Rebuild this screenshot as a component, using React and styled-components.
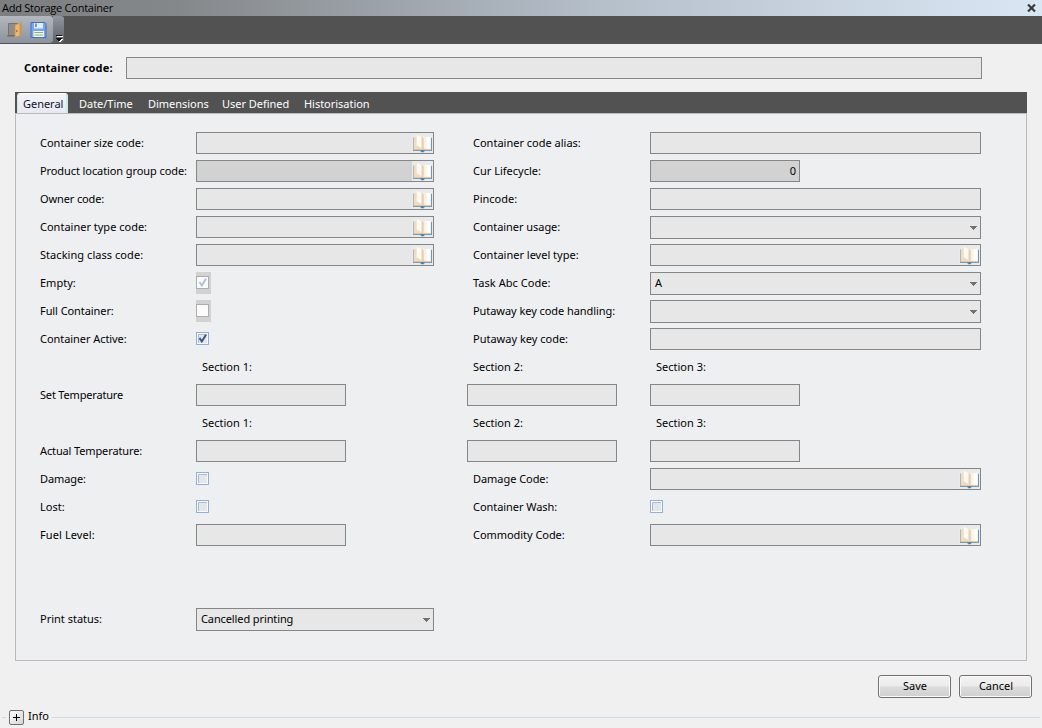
import React from 'react';
import styled, { createGlobalStyle } from 'styled-components';

const GlobalStyle = createGlobalStyle`
  * { box-sizing: border-box; }
  body {
    margin: 0;
    background: #f0f0f0;
    color: #000;
    font-family: "Noto Sans", "Open Sans", sans-serif;
    font-size: 11px;
    line-height: 14px;
  }
`;

const Window = styled.div`
  display: flex;
  flex-direction: column;
  width: 1042px;
  height: 728px;
  overflow: hidden;
`;

const TitleBar = styled.header`
  display: flex;
  align-items: center;
  justify-content: space-between;
  flex: none;
  height: 16px;
  padding: 0 6px 0 2px;
  background: linear-gradient(90deg, #7c7e80 0, #85888b 180px, #b5bfca 600px, #cfdae7 900px, #d9e6f4 100%);
`;

const Title = styled.span`
  font-family: "Open Sans", sans-serif;
  font-size: 11px;
  letter-spacing: -0.24px;
  white-space: nowrap;
`;

const ToolBar = styled.div`
  display: flex;
  flex: none;
  height: 28px;
  background: #525252;
`;

const ToolGroup = styled.div`
  display: flex;
  gap: 6px;
  width: 53px;
  height: 27px;
  padding: 5px 0 0 7px;
  border-radius: 0 3px 3px 0;
  background: linear-gradient(#b3b8c0, #8c929b);
`;

const ToolMore = styled.div`
  display: flex;
  align-items: flex-end;
  justify-content: center;
  width: 11px;
  height: 27px;
  padding: 0 0 1px 2px;
  border-radius: 0 3px 3px 0;
  background: linear-gradient(#9196a0, #5d6065);
`;

const CodeRow = styled.div`
  display: flex;
  align-items: center;
  flex: none;
  height: 48px;
  padding-left: 24px;
`;

const CodeLabel = styled.label`
  width: 102px;
  font-weight: bold;
  letter-spacing: 0.15px;
  white-space: nowrap;
`;

const Tabs = styled.nav`
  display: flex;
  align-items: flex-end;
  flex: none;
  width: 1012px;
  height: 21px;
  margin-left: 15px;
  padding-left: 2px;
  background: #525252;
`;

const Tab = styled.div`
  width: ${props => props.$width}px;
  height: 20px;
  padding: ${props => (props.$active ? '3px 0 0 5px' : '4px 0 0 11px')};
  border: ${props => (props.$active ? '1px solid #c8ecec' : '0')};
  border-right-width: ${props => (props.$active ? 2 : 0)}px;
  border-top-color: #fff;
  border-bottom: 0;
  border-radius: 3px 3px 0 0;
  background: ${props => (props.$active ? 'linear-gradient(#f4f4f8, #e6e9f0)' : 'none')};
  color: ${props => (props.$active ? '#101030' : '#fff')};
  letter-spacing: -0.03px;
  white-space: nowrap;
`;

const Panel = styled.main`
  display: grid;
  flex: none;
  grid-template-columns: 156px 271px 183px 331px;
  grid-auto-rows: 28px;
  width: 1012px;
  height: 548px;
  margin-left: 15px;
  padding: 15px 0 0 24px;
  border: 1px solid #b9babd;
  background: #eeeff1;
`;

const Label = styled.label`
  grid-column: ${props => props.$col};
  grid-row: ${props => props.$row};
  padding-left: ${props => (props.$col > 1 ? 6 : 0)}px;
  letter-spacing: ${props => props.$spacing || 0}px;
  line-height: 28px;
  white-space: nowrap;
`;

const Cell = styled.div`
  grid-column: ${props => props.$col};
  grid-row: ${props => props.$row};
  padding-top: 3px;
`;

const Box = styled.div`
  display: flex;
  align-items: center;
  justify-content: space-between;
  width: ${props => props.$width}px;
  height: ${props => (props.$select ? 23 : 22)}px;
  padding: 0 ${props => (props.$lookup ? 0 : 3)}px 0 4px;
  border: 1px solid #858688;
  background: ${props => (props.$disabled ? '#d2d2d2' : '#e7e7e7')};
`;

const Value = styled.span`
  height: 15px;
  line-height: 14px;
  letter-spacing: -0.11px;
`;

const CheckWrap = styled.div`
  width: 15px;
  height: 22px;
  padding-top: 4px;
  background: ${props => (props.$disabled ? '#d2d2d2' : 'none')};
`;

const Footer = styled.div`
  display: flex;
  justify-content: flex-end;
  flex: none;
  gap: 8px;
  height: 47px;
  padding: 14px 10px 0 0;
`;

const Button = styled.button`
  width: 73px;
  height: 23px;
  padding: 0 0 2px 1px;
  border: 1px solid #707070;
  border-radius: 3px;
  background: linear-gradient(#f3f3f3 0, #ebebeb 48%, #dcdcdc 52%, #cfcfcf 100%);
  box-shadow: inset 0 0 0 1px #fafafa;
  color: #000;
  font: inherit;
`;

const InfoRow = styled.div`
  display: flex;
  align-items: center;
  flex: none;
  height: 18px;
  padding: 0 2px;
`;

const Rule = styled.div`
  flex: ${props => (props.$width ? 'none' : 1)};
  width: ${props => props.$width || 0}px;
  height: 1px;
  background: #d0dce5;
`;

const Expander = styled.div`
  display: flex;
  width: 15px;
  height: 15px;
  margin: 0 4px 0 3px;
  border: 1px solid #707070;
  border-radius: 2px;
  background: linear-gradient(135deg, #fff, #d4d4d4);
`;

const InfoText = styled.span`
  width: 24px;
  height: 16px;
`;

const BookIcon = () => (
  <svg width="21" height="20" viewBox="0 0 21 20">
    <rect width="21" height="20" fill="#e9eaeb" />
    <path d="M1 4.500h18.500V18H1z" fill="#a9b9c6" />
    <path d="M19 5h1v13h-1z" fill="#5f9acb" />
    <path d="M1 17h18v1H1z" fill="#8399aa" />
    <path d="M2 4h9v12.500H2z" fill="#f2dcc0" />
    <path d="M11 4h8v12.500h-8z" fill="#fbf1e2" />
    <path d="M14.500 4.500l3.500-1v12l-3.500 1z" fill="#fffdf8" />
    <path d="M11 5v11" stroke="#d8b98f" strokeWidth=".8" />
    <path d="M2 16.500h17" stroke="#e3c59c" strokeWidth=".8" />
    <path d="M4.500 1l5 3v11l-5-2.500z" fill="#fffaf2" stroke="#eadfcf" strokeWidth=".5" />
    <path d="M8.500 17.500h4v1h-1v.7h-2v-.7h-1z" fill="#2f72a9" />
  </svg>
);

const Arrow = () => (
  <svg width="7" height="4" viewBox="0 0 7 4" shapeRendering="crispEdges">
    <path d="M0 0h7v1H6v1H5v1H4v1H3V3H2V2H1V1H0z" fill="#707276" />
  </svg>
);

const DoorIcon = () => (
  <svg width="17" height="18" viewBox="0 0 17 18">
    <path d="M1.500 2.500h9v12h-9z" fill="#8c8d8d" stroke="#77716b" />
    <path d="M0 15h11" stroke="#6c6259" />
    <path d="M8 4l6.500-2.500v12.500L8 16.500z" fill="#e9b779" stroke="#c89353" strokeWidth=".8" />
    <path d="M12.500 3l2-1v11.500l-2 1z" fill="#d29346" />
    <path d="M9.300 9h1v2h-1z" fill="#8a5b22" />
  </svg>
);

const DiskIcon = () => (
  <svg width="17" height="18" viewBox="0 0 17 18">
    <path d="M1 1.500h14l1 1V16.500H1z" fill="#75a5ec" stroke="#3f70bd" />
    <path d="M4 2h9v5.500H4z" fill="#e3edfa" />
    <path d="M5 2.500h2v3.500H5z" fill="#6c98d9" />
    <path d="M3.500 10h10.500v6h-10.500z" fill="#f4f8ee" />
    <path d="M4.500 11.500h8.500M4.500 14h8.500" stroke="#83b06c" strokeWidth="1.200" />
  </svg>
);

const MoreIcon = () => (
  <svg width="7" height="7" viewBox="0 0 7 7" shapeRendering="crispEdges">
    <path d="M1 1h6v1H1zM1 4h6v1H6v1H5v1H3V6H2V5H1z" fill="#fff" />
    <path d="M0 0h6v1H0zM0 3h6v1H5v1H4v1H2V5H1V4H0z" fill="#111" />
  </svg>
);

const CloseIcon = () => (
  <svg width="9" height="8" viewBox="0 0 9 8">
    <path d="M1 .5l7 7M8 .5l-7 7" stroke="#3c3c3c" strokeWidth="2.200" />
  </svg>
);

const Plus = () => (
  <svg width="13" height="13" viewBox="0 0 13 13" shapeRendering="crispEdges">
    <path d="M3 6h7v1H3zM6 3h1v7H6z" fill="#000" />
  </svg>
);

function CheckBox({ checked, disabled }) {
  return (
    <CheckWrap $disabled={disabled}>
      <svg width="13" height="13" viewBox="0 0 13 13">
        <rect x=".5" y=".5" width="12" height="12" fill="#fbfbfb" stroke={disabled ? '#adadad' : '#8fb0dc'} />
        {!disabled && <path d="M2 2h9v9H2z" fill="#e3e6ea" />}
        {!disabled && <path d="M2.500 11V2.500H11" fill="none" stroke="#b3b9c2" />}
        {checked && (
          <path d="M3.500 6l2.300 3.500L10 2.800" fill="none" stroke={disabled ? '#b0bfda' : '#34568f'} strokeWidth="2" />
        )}
      </svg>
    </CheckWrap>
  );
}

function Field({ type, width, value, disabled }) {
  if (type === 'check') return <CheckBox checked={value} disabled={disabled} />;
  return (
    <Box $width={width} $select={type === 'select'} $lookup={type === 'lookup'} $disabled={disabled}>
      <Value>{type === 'number' ? '' : value}</Value>
      {type === 'number' && <Value>{value}</Value>}
      {type === 'lookup' && <BookIcon />}
      {type === 'select' && <Arrow />}
    </Box>
  );
}

const tabs = [
  ['General', 51],
  ['Date/Time', 69],
  ['Dimensions', 74],
  ['User Defined', 82],
  ['Historisation', 90],
];

// [column, row, text, letter spacing]
const labels = [
  [1, 1, 'Container size code:'],
  [1, 2, 'Product location group code:', -0.09],
  [1, 3, 'Owner code:', -0.12],
  [1, 4, 'Container type code:'],
  [1, 5, 'Stacking class code:', 0.05],
  [1, 6, 'Empty:'],
  [1, 7, 'Full Container:', -0.08],
  [1, 8, 'Container Active:', -0.06],
  [2, 9, 'Section 1:'],
  [1, 10, 'Set Temperature', -0.18],
  [2, 11, 'Section 1:'],
  [1, 12, 'Actual Temperature:', -0.13],
  [1, 13, 'Damage:', -0.1],
  [1, 14, 'Lost:'],
  [1, 15, 'Fuel Level:', 0.1],
  [1, 18, 'Print status:'],
  [3, 1, 'Container code alias:'],
  [3, 2, 'Cur Lifecycle:'],
  [3, 3, 'Pincode:'],
  [3, 4, 'Container usage:', -0.05],
  [3, 5, 'Container level type:'],
  [3, 6, 'Task Abc Code:', 0.05],
  [3, 7, 'Putaway key code handling:', -0.06],
  [3, 8, 'Putaway key code:'],
  [3, 9, 'Section 2:'],
  [4, 9, 'Section 3:'],
  [3, 11, 'Section 2:'],
  [4, 11, 'Section 3:'],
  [3, 13, 'Damage Code:', -0.05],
  [3, 14, 'Container Wash:', -0.05],
  [3, 15, 'Commodity Code:', -0.05],
];

const fields = [
  { col: 2, row: 1, type: 'lookup', width: 238 },
  { col: 2, row: 2, type: 'lookup', width: 238, disabled: true },
  { col: 2, row: 3, type: 'lookup', width: 238 },
  { col: 2, row: 4, type: 'lookup', width: 238 },
  { col: 2, row: 5, type: 'lookup', width: 238 },
  { col: 2, row: 6, type: 'check', value: true, disabled: true },
  { col: 2, row: 7, type: 'check', disabled: true },
  { col: 2, row: 8, type: 'check', value: true },
  { col: 2, row: 10, width: 150 },
  { col: 3, row: 10, width: 150 },
  { col: 4, row: 10, width: 150 },
  { col: 2, row: 12, width: 150 },
  { col: 3, row: 12, width: 150 },
  { col: 4, row: 12, width: 150 },
  { col: 2, row: 13, type: 'check' },
  { col: 2, row: 14, type: 'check' },
  { col: 2, row: 15, width: 150 },
  { col: 2, row: 18, type: 'select', width: 238, value: 'Cancelled printing' },
  { col: 4, row: 1, width: 331 },
  { col: 4, row: 2, type: 'number', width: 150, value: '0', disabled: true },
  { col: 4, row: 3, width: 331 },
  { col: 4, row: 4, type: 'select', width: 331 },
  { col: 4, row: 5, type: 'lookup', width: 331 },
  { col: 4, row: 6, type: 'select', width: 331, value: 'A' },
  { col: 4, row: 7, type: 'select', width: 331 },
  { col: 4, row: 8, width: 331 },
  { col: 4, row: 13, type: 'lookup', width: 331 },
  { col: 4, row: 14, type: 'check' },
  { col: 4, row: 15, type: 'lookup', width: 331 },
];

export default function App() {
  return (
    <Window>
      <GlobalStyle />
      <TitleBar>
        <Title>Add Storage Container</Title>
        <CloseIcon />
      </TitleBar>
      <ToolBar>
        <ToolGroup>
          <DoorIcon />
          <DiskIcon />
        </ToolGroup>
        <ToolMore>
          <MoreIcon />
        </ToolMore>
      </ToolBar>
      <CodeRow>
        <CodeLabel>Container code:</CodeLabel>
        <Box $width={856} />
      </CodeRow>
      <Tabs>
        {tabs.map(([name, width], i) => (
          <Tab key={name} $width={width} $active={i === 0}>{name}</Tab>
        ))}
      </Tabs>
      <Panel>
        {labels.map(([col, row, text, spacing]) => (
          <Label key={`${col}-${row}`} $col={col} $row={row} $spacing={spacing}>{text}</Label>
        ))}
        {fields.map(({ col, row, ...rest }) => (
          <Cell key={`${col}-${row}`} $col={col} $row={row}>
            <Field {...rest} />
          </Cell>
        ))}
      </Panel>
      <Footer>
        <Button>Save</Button>
        <Button>Cancel</Button>
      </Footer>
      <InfoRow>
        <Rule $width={4} />
        <Expander><Plus /></Expander>
        <InfoText>Info</InfoText>
        <Rule />
      </InfoRow>
    </Window>
  );
}
